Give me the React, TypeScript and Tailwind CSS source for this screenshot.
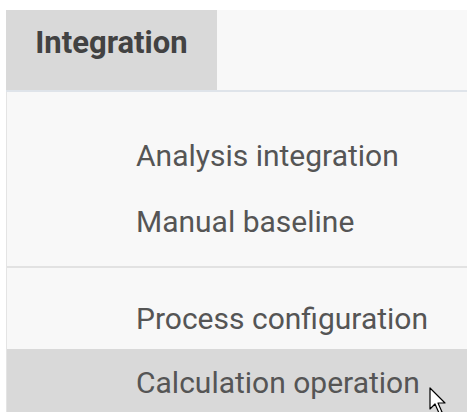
import React from "react";

const items = ["Analysis integration", "Manual baseline"];

export default function App() {
  return (
    <div className="w-[467px] h-[412px] overflow-hidden bg-white pt-[10px] pl-[6px] font-['Roboto',sans-serif]">
      {/* Tab strip */}
      <div className="flex h-[80px] bg-[#f8f8f8]">
        <div className="w-[211px] flex justify-center pt-[15px] bg-[#d9d9d9]">
          <span className="text-[31px] font-bold text-[#424242] leading-[36px]">Integration</span>
        </div>
      </div>
      <div className="h-[2px] bg-[#dfe4ea]" />

      {/* Menu */}
      <div className="relative h-[330px] bg-[#f8f8f8] border-l border-[#e4e4e4]">
        <div className="pt-[30px]">
          {items.map((item) => (
            <div key={item} className="h-[66px] flex items-center pl-[129px] text-[30px] text-[#555]">
              {item}
            </div>
          ))}
        </div>
        <div className="mt-[12px] h-[2px] bg-[#e2e2e2]" />
        <div className="h-[81px] pt-[19px] flex items-center pl-[129px] text-[30px] text-[#555]">
          Process configuration
        </div>
        <div className="h-[66px] flex items-center pl-[129px] text-[30px] text-[#555] bg-[#d9d9d9]">
          Calculation operation
        </div>
        <svg className="absolute left-[422px] top-[295px]" width="18" height="28" viewBox="0 0 18 28">
          <path d="M1 1 L1 22 L6 17 L10 26 L13 25 L9 16 L16 16 Z" fill="white" stroke="black" strokeWidth="1.2" strokeLinejoin="round" />
        </svg>
      </div>
    </div>
  );
}
